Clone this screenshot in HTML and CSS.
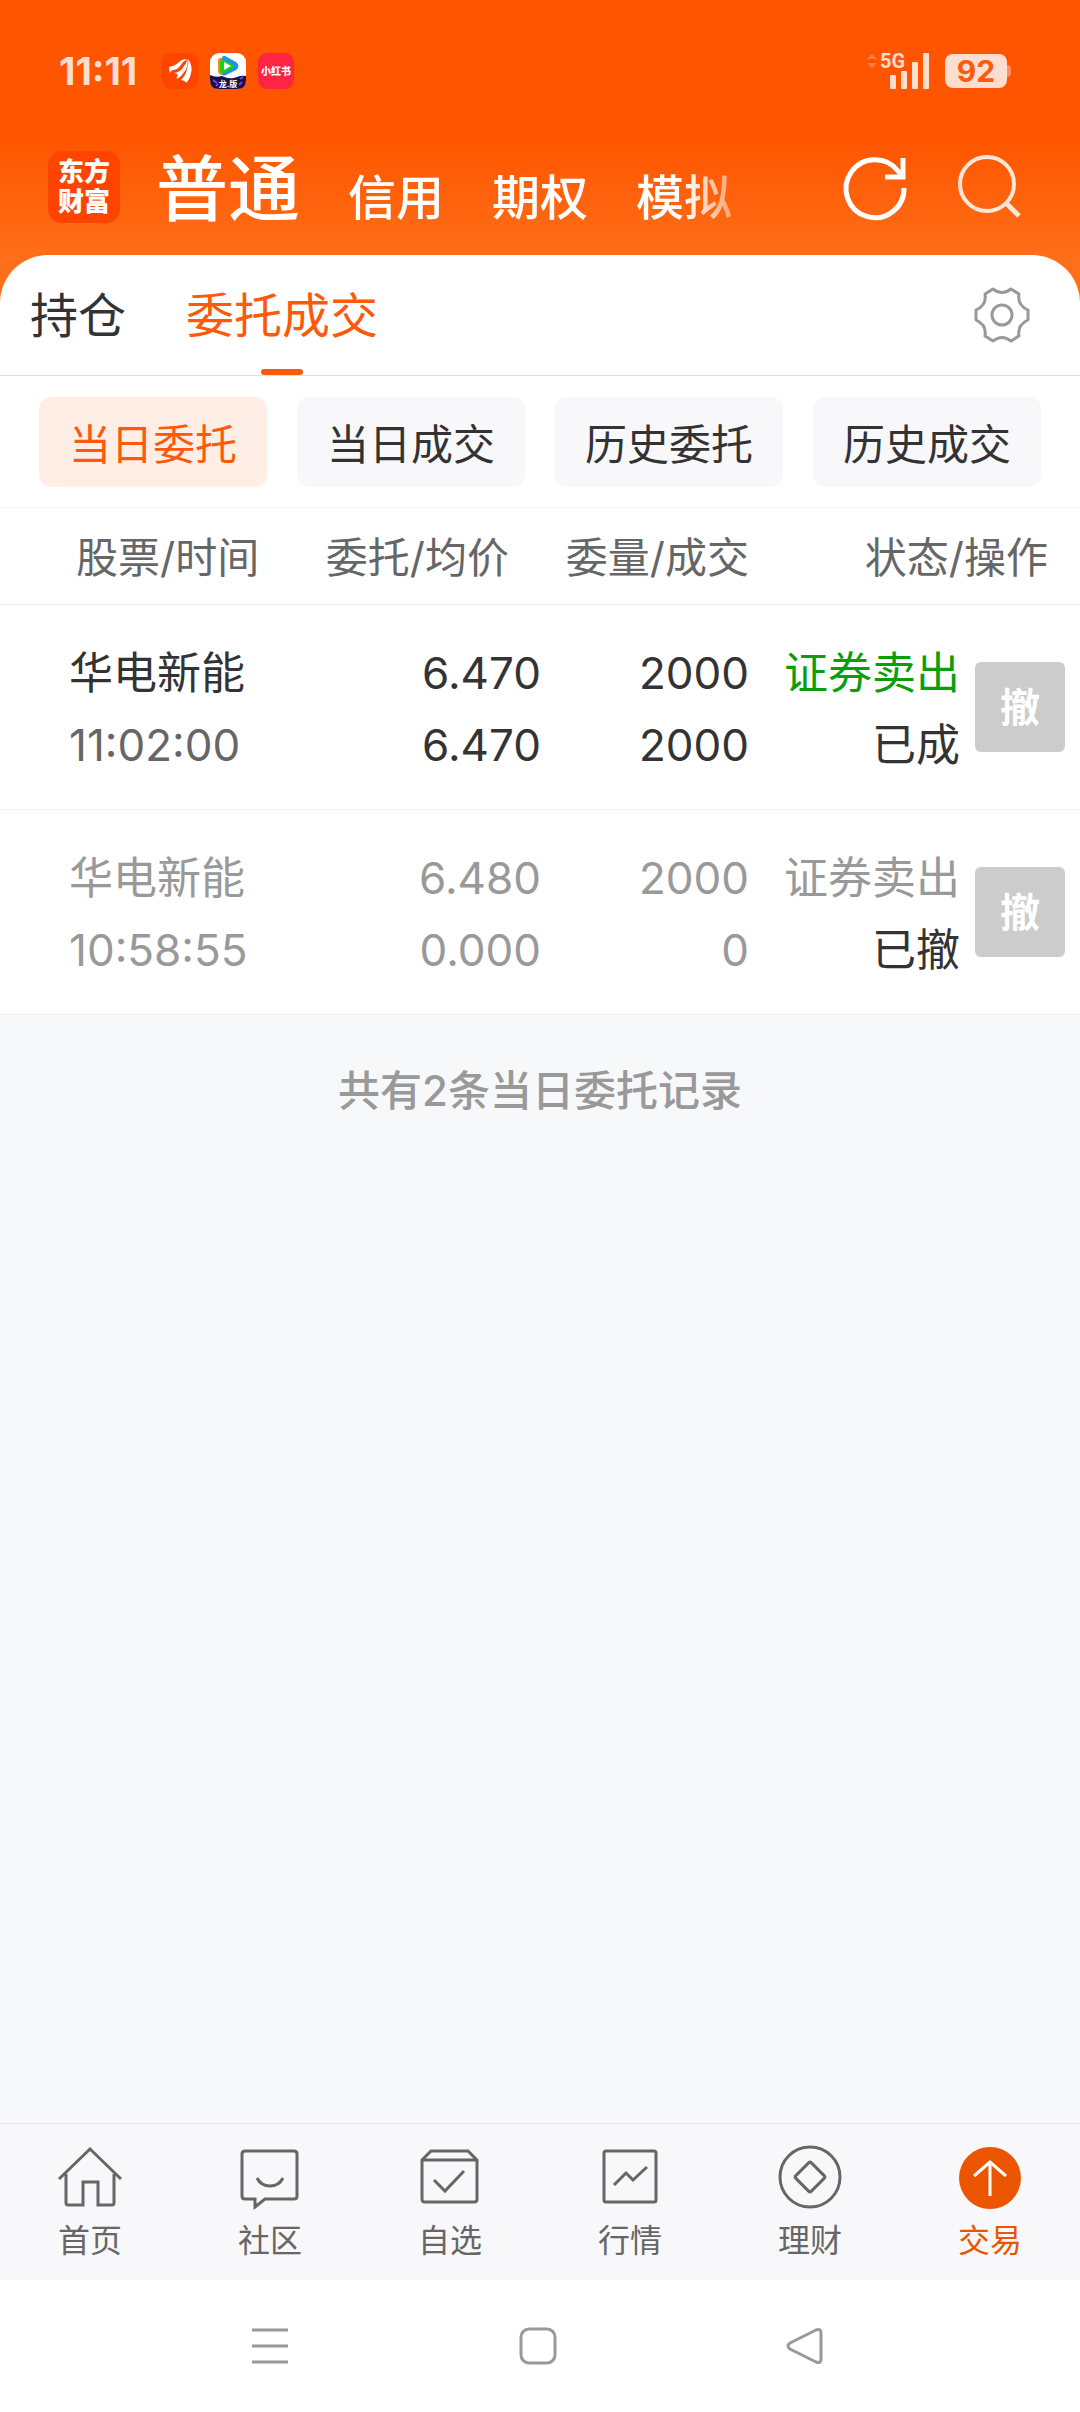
FILE: index.html
```
<!DOCTYPE html>
<html lang="zh-CN">
<head>
    <meta charset="UTF-8">
    <meta name="viewport" content="width=device-width, initial-scale=1.0">
    <title>委托成交</title>
    <link rel="stylesheet" href="styles.css">
</head>
<body>
    <header class="top">
        <div class="statusbar">
            <span class="clock">11:11</span>
            <div class="app-icons">
                <svg class="app-icon" viewBox="0 0 36 36">
                    <rect width="36" height="36" rx="9" fill="#ff4400"/>
                    <path d="M7 14Q13 13 17 9Q20 6 25 6Q20 9 18 13Q15 17 11 17Q8 18 8 20Q7 17 7 14Z" fill="#fff"/>
                    <path d="M12 20Q19 19 22 13Q25 10 25 6Q27 12 23 18Q20 23 15 26Q14 25 16 22Q14 20 12 20Z" fill="#fff"/>
                    <path d="M19 27Q24 22 25 16Q27 11 26 6Q31 13 29 20Q28 26 24 30Q24 28 19 27Z" fill="#fff"/>
                </svg>
                <svg class="app-icon" viewBox="0 0 36 36">
                    <rect width="36" height="36" rx="9" fill="#fff"/>
                    <path d="M10 5Q8 5 8 8V19Q9 22 12 22L14 13L13 5Z" fill="#ff8a1c"/>
                    <path d="M15 3L26 9Q31 13 26 17L16 22Q11 24 12 18V7Q12 2 15 3Z" fill="#1a94e8"/>
                    <path d="M14 7L23 12Q25 13 23 15L14 20Q10 21 10 17V9Q11 5 14 7Z" fill="#19d11c"/>
                    <path d="M14 9L21 13L14 17Z" fill="#fff"/>
                    <path d="M0 22Q6 25 12 23Q20 27 27 24Q32 22 36 23V27Q36 36 27 36H9Q0 36 0 27Z" fill="#17104f"/>
                    <path d="M3 27L7 30M30 26L33 24M6 33L8 31M29 32L32 29" stroke="#8a3fd0" stroke-width="2"/>
                    <text x="18" y="34" class="app-caption">龙.版</text>
                </svg>
                <svg class="app-icon" viewBox="0 0 36 36">
                    <rect width="36" height="36" rx="9" fill="#ff2442"/>
                    <text x="18" y="22" class="app-name">小红书</text>
                </svg>
            </div>
            <svg class="signal" viewBox="0 0 62 54" role="img" aria-label="5G">
                <path d="M0 15L5 10L10 15ZM0 19H10L5 24Z" fill="#ff7d40"/>
                <text x="13" y="24" class="net">5G</text>
                <g fill="#ffddcf">
                    <rect x="23" y="31" width="6" height="14" rx="1"/>
                    <rect x="34" y="27" width="6" height="18" rx="1"/>
                    <rect x="45" y="18" width="6" height="27" rx="1"/>
                    <rect x="56" y="9" width="6" height="36" rx="1"/>
                </g>
            </svg>
            <span class="battery">92</span>
        </div>
        <div class="titlebar">
            <a class="logo" href="#">东方<br>财富</a>
            <nav class="accounts">
                <a class="current" href="#">普通</a>
                <a href="#">信用</a>
                <a href="#">期权</a>
                <a href="#">模拟</a>
            </nav>
            <button class="icon-btn" aria-label="刷新">
                <svg viewBox="0 0 66 66" fill="none" stroke="#fff" stroke-width="5">
                    <path d="M62 34A29 29 0 1 1 56 17L61 23"/>
                    <path d="M61 4V23H43"/>
                </svg>
            </button>
            <button class="icon-btn" aria-label="搜索">
                <svg viewBox="0 0 66 66" fill="none" stroke="#ffe6d8" stroke-width="4">
                    <circle cx="31" cy="30" r="27"/>
                    <path d="M50 49L63 62" stroke-width="5"/>
                </svg>
            </button>
        </div>
    </header>

    <main class="sheet">
        <div class="tabs">
            <a href="#">持仓</a>
            <a class="active" href="#">委托成交</a>
            <button class="settings" aria-label="设置">
                <svg viewBox="0 0 56 56" fill="none" stroke="#999" stroke-width="3" stroke-linejoin="round">
                    <path d="M19 2Q28 9 37 2L45 7Q43 18 54 23V33Q43 38 45 49L37 54Q28 47 19 54L11 49Q13 38 2 33V23Q13 18 11 7Z"/>
                    <circle cx="28" cy="28" r="10"/>
                </svg>
            </button>
        </div>

        <div class="filters">
            <button class="chip selected">当日委托</button>
            <button class="chip">当日成交</button>
            <button class="chip">历史委托</button>
            <button class="chip">历史成交</button>
        </div>

        <table class="orders">
            <colgroup>
                <col>
                <col class="col-price">
                <col class="col-amount">
                <col class="col-state">
                <col class="col-action">
            </colgroup>
            <thead>
                <tr>
                    <th class="stock">股票/时间</th>
                    <th class="price">委托/均价</th>
                    <th>委量/成交</th>
                    <th class="state" colspan="2">状态/操作</th>
                </tr>
            </thead>
            <tbody>
                <tr>
                    <td class="stock"><div>华电新能</div><div class="time">11:02:00</div></td>
                    <td><div>6.470</div><div>6.470</div></td>
                    <td><div>2000</div><div>2000</div></td>
                    <td><div class="sell">证券卖出</div><div>已成</div></td>
                    <td class="action"><button class="cancel" disabled>撤</button></td>
                </tr>
                <tr class="cancelled">
                    <td class="stock"><div>华电新能</div><div class="time">10:58:55</div></td>
                    <td><div>6.480</div><div>0.000</div></td>
                    <td><div>2000</div><div>0</div></td>
                    <td><div class="sell">证券卖出</div><div class="done">已撤</div></td>
                    <td class="action"><button class="cancel" disabled>撤</button></td>
                </tr>
            </tbody>
        </table>
    </main>

    <p class="summary">共有2条当日委托记录</p>

    <nav class="tabbar">
        <a href="#">
            <svg viewBox="0 0 64 64">
                <path d="M1 33L32 3L63 33M8 28V57Q8 59 10 59H25V36H40V59H54Q56 59 56 57V28"/>
            </svg>
            首页
        </a>
        <a href="#">
            <svg viewBox="0 0 64 64">
                <path d="M7 5H56Q59 5 59 8V50Q59 53 56 53H27L17 61V53H7Q4 53 4 50V8Q4 5 7 5Z"/>
                <path d="M19 32Q23 40 32 40Q41 40 45 32"/>
            </svg>
            社区
        </a>
        <a href="#">
            <svg viewBox="0 0 64 64">
                <path d="M4 14L13 5H50L59 14V53Q59 56 56 56H7Q4 56 4 53ZM4 14H59"/>
                <path d="M16 34L27 45L46 25"/>
            </svg>
            自选
        </a>
        <a href="#">
            <svg viewBox="0 0 64 64">
                <rect x="6" y="5" width="52" height="51" rx="2"/>
                <path d="M16 39L28 27L35 34L49 21"/>
            </svg>
            行情
        </a>
        <a href="#">
            <svg viewBox="0 0 64 64">
                <circle cx="32" cy="31" r="30"/>
                <rect x="21" y="20" width="22" height="22" rx="2" transform="rotate(45 32 31)"/>
            </svg>
            理财
        </a>
        <a class="active" href="#">
            <svg viewBox="0 0 64 64">
                <circle cx="32" cy="32" r="31" fill="#ec5500" stroke="none"/>
                <path d="M32 50V17M16 30L32 16L48 30" stroke="#fff"/>
            </svg>
            交易
        </a>
    </nav>

    <div class="sysbar">
        <button aria-label="最近任务">
            <svg viewBox="0 0 36 36"><path d="M0 2H36M0 18H36M0 34H36"/></svg>
        </button>
        <button aria-label="主屏幕">
            <svg viewBox="0 0 36 36"><rect x="1" y="1" width="34" height="34" rx="8"/></svg>
        </button>
        <button aria-label="返回">
            <svg viewBox="0 0 36 36"><path d="M2 15L28 2Q33 0 33 5V31Q33 36 28 34L2 21Q-2 18 2 15Z"/></svg>
        </button>
    </div>
</body>
</html>
```
FILE: styles.css
```
* {
    margin: 0;
    padding: 0;
    box-sizing: border-box;
}

body {
    display: flex;
    flex-direction: column;
    min-height: 100vh;
    background-color: #f7f8fa;
    color: #333;
    font-family: Inter, "Noto Sans CJK SC", sans-serif;
    font-size: 42px;
}

a {
    color: inherit;
    text-decoration: none;
}

button {
    border: none;
    background: none;
    color: inherit;
    font: inherit;
}

svg {
    display: block;
    overflow: visible;
}

/* header */
.top {
    padding-bottom: 48px;
    background: linear-gradient(#ff5500 45%, #ff6e18 85%);
}

.statusbar {
    display: flex;
    align-items: center;
    padding: 48px 73px 0 59px;
    height: 94px;
    color: #ffddcf;
}

.clock {
    font-size: 38px;
    font-weight: 700;
    line-height: 46px;
}

.app-icons {
    display: flex;
    gap: 12px;
    margin-left: 25px;
    margin-right: auto;
}

.app-icon {
    width: 36px;
    height: 36px;
}

.app-name {
    font-size: 10px;
    font-weight: 900;
    fill: #fff;
    text-anchor: middle;
}

.app-caption {
    font-size: 8px;
    font-weight: 700;
    fill: #fff;
    text-anchor: middle;
}

.signal {
    width: 62px;
    height: 54px;
}

.net {
    font-family: Roboto, sans-serif;
    font-size: 20px;
    font-weight: 700;
    fill: #ffddcf;
}

.battery {
    position: relative;
    width: 62px;
    margin-left: 16px;
    border-radius: 8px;
    background-color: #ffddcf;
    color: #f95c0c;
    font-size: 30px;
    font-weight: 700;
    line-height: 34px;
    text-align: center;
}

.battery::after {
    content: "";
    position: absolute;
    top: 11px;
    right: -4px;
    width: 4px;
    height: 12px;
    border-radius: 0 4px 4px 0;
    background-color: #ff8f5c;
}

.titlebar {
    display: flex;
    align-items: center;
    padding: 55px 58px 30px 48px;
}

.logo {
    padding: 6px 0;
    width: 72px;
    height: 72px;
    border-radius: 14px;
    background-color: #ff4400;
    color: #fff;
    font-size: 26px;
    font-weight: 900;
    line-height: 30px;
    text-align: center;
}

.accounts {
    display: flex;
    align-items: baseline;
    gap: 48px;
    margin-left: 36px;
    margin-right: auto;
    padding-top: 4px;
    color: #fff;
    font-size: 48px;
    font-weight: 500;
    line-height: 48px;
    -webkit-mask-image: linear-gradient(to right, #000 92%, rgba(0, 0, 0, 0.4));
    mask-image: linear-gradient(to right, #000 92%, rgba(0, 0, 0, 0.4));
}

.accounts .current {
    font-size: 72px;
    line-height: 72px;
}

.icon-btn {
    width: 66px;
    height: 66px;
    margin-left: 48px;
}

/* sheet */
.sheet {
    margin-top: -48px;
    border-radius: 48px 48px 0 0;
    background-color: #fff;
}

.tabs {
    display: flex;
    align-items: center;
    gap: 60px;
    padding: 0 50px 0 30px;
    border-bottom: 1px solid #e0e0e0;
    font-size: 48px;
    line-height: 120px;
}

.tabs a {
    padding-top: 2px;
    line-height: 118px;
}

.tabs .active {
    position: relative;
    color: #fa5a0a;
}

.tabs .active::after {
    content: "";
    position: absolute;
    left: 50%;
    bottom: 0;
    width: 42px;
    height: 6px;
    margin-left: -21px;
    border-radius: 3px;
    background-color: #fa5a0a;
}

.settings {
    width: 56px;
    height: 56px;
    margin-left: auto;
}

.filters {
    display: grid;
    grid-template-columns: repeat(4, 1fr);
    gap: 30px;
    padding: 21px 39px 20px;
    border-bottom: 1px solid #f5f5f5;
}

.chip {
    height: 90px;
    padding-bottom: 2px;
    border-radius: 12px;
    background-color: #f8f8fa;
}

.chip.selected {
    background-color: #ffeee6;
    color: #fa5a0a;
}

.orders {
    width: 100%;
    border-collapse: collapse;
    table-layout: fixed;
    text-align: right;
}

.col-price {
    width: 238px;
}

.col-amount {
    width: 208px;
}

.col-state {
    width: 211px;
}

.col-action {
    width: 120px;
}

.orders th {
    padding-top: 4px;
    border-bottom: 1px solid #eee;
    color: #666;
    font-weight: 400;
    line-height: 92px;
    white-space: nowrap;
}

.orders .stock {
    padding-left: 69px;
    text-align: left;
}

.orders th.stock {
    padding-left: 76px;
}

.orders th.price,
.orders th.state {
    padding-right: 32px;
}

.orders td {
    padding: 32px 0 28px;
    border-bottom: 1px solid #eee;
    font-size: 44px;
    line-height: 72px;
    white-space: nowrap;
}

.orders td.action {
    padding: 0;
    text-align: center;
}

.orders .time {
    color: #666;
}

.orders .sell {
    color: #0a9f0a;
}

.orders .cancelled,
.orders .cancelled .time,
.orders .cancelled .sell {
    color: #999;
}

.orders .cancelled .done {
    color: #333;
}

.cancel {
    width: 90px;
    height: 90px;
    padding-top: 2px;
    border-radius: 6px;
    background-color: #ccc;
    color: #fff;
    font-size: 40px;
    font-weight: 700;
    vertical-align: middle;
}

.summary {
    flex: 1;
    padding-top: 42px;
    color: #999;
    font-weight: 500;
    line-height: 68px;
    text-align: center;
}

/* bottom bars */
.tabbar {
    display: grid;
    grid-template-columns: repeat(6, 1fr);
    padding: 22px 0 16px;
    border-top: 1px solid #e2e4e6;
    background-color: #f8f8fa;
    color: #666;
    font-size: 32px;
    line-height: 46px;
}

.tabbar a {
    display: flex;
    flex-direction: column;
    align-items: center;
    gap: 8px;
}

.tabbar svg {
    width: 64px;
    height: 64px;
    fill: none;
    stroke: #666;
    stroke-width: 3;
}

.tabbar .active {
    color: #ec5500;
}

.sysbar {
    display: grid;
    grid-template-columns: repeat(3, 1fr);
    justify-items: center;
    padding: 48px 140px 48px 136px;
    background-color: #fff;
}

.sysbar svg {
    width: 36px;
    height: 36px;
    fill: none;
    stroke: #999;
    stroke-width: 3;
}
```
